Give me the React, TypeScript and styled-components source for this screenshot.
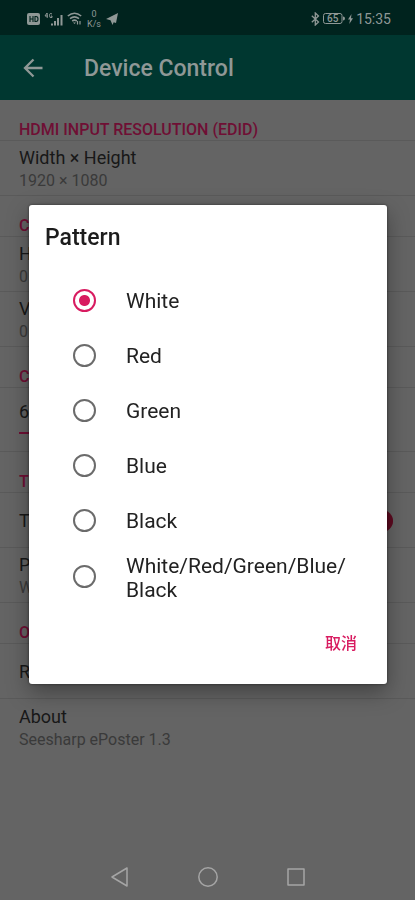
import React, { useState } from "react";
import styled, { createGlobalStyle } from "styled-components";

const color = {
  statusBar: "#00231e",
  appBar: "#003730",
  page: "#646464",
  divider: "#5a5a5a",
  barText: "#8f9896",
  title: "#181818",
  summary: "#3a3a3a",
  accentDim: "#6f0f34",
  accent: "#d81b60",
};

const GlobalStyle = createGlobalStyle`
  * { box-sizing: border-box; }
  body {
    margin: 0;
    background: ${color.page};
    font-family: Roboto, "Noto Sans CJK SC", sans-serif;
  }
  button { font: inherit; border: 0; background: none; padding: 0; cursor: pointer; }
`;

const Screen = styled.div`
  min-height: 100vh;
  display: flex;
  flex-direction: column;
`;

const StatusBar = styled.div`
  height: 35px;
  padding: 2px 24px 0 27px;
  display: flex;
  align-items: center;
  justify-content: space-between;
  background: ${color.statusBar};
  color: ${color.barText};
  font-size: 14px;
`;

const StatusGroup = styled.div<{ $gap: number }>`
  display: flex;
  align-items: center;
  gap: ${(p) => p.$gap}px;
`;

const NetSpeed = styled.div`
  width: 16px;
  font-size: 9px;
  line-height: 10px;
  text-align: center;
`;

const AppBar = styled.header`
  height: 65px;
  padding: 0 20px;
  display: flex;
  align-items: center;
  gap: 36px;
  background: ${color.appBar};
  color: ${color.barText};
`;

const BackButton = styled.button`
  display: flex;
  width: 28px;
  height: 28px;
  color: inherit;
`;

const AppTitle = styled.h1`
  margin: 0;
  padding-top: 2px;
  font-size: 23px;
  font-weight: 500;
`;

const Settings = styled.main`
  flex: 1;
`;

const SectionTitle = styled.h2`
  margin: 0;
  height: 41px;
  padding: 20px 19px 0;
  border-bottom: 1px solid ${color.divider};
  color: ${color.accentDim};
  font-size: 16px;
  line-height: 20px;
  font-weight: 500;
  white-space: nowrap;
`;

const Row = styled.div<{ $tall?: boolean; $last?: boolean }>`
  height: ${(p) => (p.$tall ? 64 : 55)}px;
  padding: 2px 19px 0;
  display: flex;
  align-items: center;
  justify-content: space-between;
  border-bottom: ${(p) => (p.$last ? 0 : 1)}px solid ${color.divider};
`;

const RowText = styled.div`
  flex: 1;
  color: ${color.title};
  font-size: 18px;
  line-height: 24px;
`;

const Summary = styled.div`
  color: ${color.summary};
  font-size: 16px;
  line-height: 22px;
`;

const Range = styled.input`
  display: block;
  appearance: none;
  width: 100%;
  height: 2px;
  margin: 8px 0;
  background: linear-gradient(to right, ${color.accentDim} 50%, transparent 50%);
`;

const Switch = styled.input`
  appearance: none;
  width: 44px;
  height: 16px;
  margin: 0 3px 0 0;
  border-radius: 8px;
  background: #65384a;
  display: flex;
  align-items: center;
  justify-content: flex-end;
  &::after {
    content: "";
    width: 22px;
    height: 22px;
    border-radius: 50%;
    background: #5e0a20;
  }
`;

const NavBar = styled.nav`
  height: 47px;
  display: flex;
  justify-content: center;
  align-items: center;
  gap: 64px;
`;

const NavButton = styled.button`
  width: 24px;
  height: 24px;
  color: #a5a5a5;
`;

const DialogLayer = styled.div`
  position: fixed;
  inset: 0;
  padding: 35px 28px 47px 29px;
  display: flex;
  align-items: center;
`;

const Dialog = styled.section`
  width: 100%;
  padding-bottom: 20px;
  border-radius: 3px;
  background: #fff;
  box-shadow: 0 8px 22px rgba(0, 0, 0, 0.35), 0 0 3px rgba(0, 0, 0, 0.5);
`;

const DialogTitle = styled.h2`
  margin: 0;
  padding: 19px 16px 21px;
  color: #1c1c1c;
  font-size: 23px;
  line-height: 28px;
  font-weight: 500;
`;

const Options = styled.div`
  display: flex;
  flex-direction: column;
`;

const Option = styled.label`
  min-height: 55px;
  padding: 4px 32px 4px 44px;
  display: flex;
  align-items: center;
  gap: 30px;
  color: #222;
  font-size: 21px;
  line-height: 24px;
  cursor: pointer;
`;

const OptionText = styled.span`
  flex: 1;
  padding-top: 2px;
`;

const Radio = styled.input`
  appearance: none;
  flex: none;
  width: 23px;
  height: 23px;
  margin: 0;
  border: 2px solid #6b6b6b;
  border-radius: 50%;
  &:checked {
    border-color: ${color.accent};
    background: radial-gradient(circle, ${color.accent} 5px, transparent 6px);
  }
`;

const Actions = styled.div`
  display: flex;
  justify-content: flex-end;
  padding: 14px 22px 0;
`;

const CancelButton = styled.button`
  height: 44px;
  padding: 0 8px;
  color: ${color.accent};
  font-size: 16px;
  font-weight: 500;
`;

const patterns = ["White", "Red", "Green", "Blue", "Black", "White/Red/Green/Blue/\u200bBlack"];

function HdIcon() {
  return (
    <svg width="13" height="12" viewBox="0 0 13 12">
      <rect width="13" height="12" rx="2" fill="currentColor" />
      <path d="M3 3v6M3 6h3M6 3v6M8 3.5v5h1q2 0 2-2.5T9 3.5z" fill="none" stroke={color.statusBar} strokeWidth="1.1" />
    </svg>
  );
}

function SignalIcon() {
  return (
    <svg width="19" height="14" viewBox="0 0 19 14" fill="none" stroke="currentColor">
      <path d="M3 1L1 4h3M3.2 1v5M8 2Q5.5 .5 5.5 3.5T8 5.5V4H7" strokeWidth="1" />
      <path d="M8 13.5v-2M11 13.5V9M14 13.5V6M17.5 13.5V3" strokeWidth="2" />
    </svg>
  );
}

function WifiIcon() {
  return (
    <svg width="15" height="13" viewBox="0 0 15 13" fill="none" stroke="currentColor" strokeWidth="1.6">
      <path d="M.8 4Q7.5-1.5 14.2 4M3 6.6q4.5-3.4 9 0M5.2 9q2.3-1.7 4.6 0" />
      <path d="M6 10.5h3L7.5 12z" fill="currentColor" stroke="none" />
      <path d="M10.5 9v3.5M13 9v3.5" strokeWidth="1.2" />
    </svg>
  );
}

function SendIcon() {
  return (
    <svg width="12" height="12" viewBox="0 0 12 12">
      <path d="M12 0L0 6l4.5 1.3L6.5 12l1.2-2.8L10 10z" fill="currentColor" />
    </svg>
  );
}

function BluetoothIcon() {
  return (
    <svg width="9" height="14" viewBox="0 0 9 14" fill="none" stroke="currentColor" strokeWidth="1.3">
      <path d="M.8 3.8L7.5 10 4.3 13V1l3.2 3L.8 10.2" />
    </svg>
  );
}

function BatteryIcon() {
  return (
    <svg width="22" height="11" viewBox="0 0 22 11">
      <rect x=".5" y=".5" width="18.5" height="10" rx="2" fill="none" stroke="currentColor" />
      <path d="M20 3.5q2 0 2 2t-2 2z" fill="currentColor" />
      <text x="9.75" y="9" textAnchor="middle" fontSize="10" fontWeight="500" fill="currentColor">65</text>
    </svg>
  );
}

function BoltIcon() {
  return (
    <svg width="5" height="10" viewBox="0 0 5 10">
      <path d="M3.5 0L0 5.6h2L1.3 10 5 4.2H3z" fill="currentColor" />
    </svg>
  );
}

function Setting({ title, summary, last }: { title: string; summary?: string; last?: boolean }) {
  return (
    <Row $last={last}>
      <RowText>
        {title}
        {summary && <Summary>{summary}</Summary>}
      </RowText>
    </Row>
  );
}

export default function App() {
  const [selected, setSelected] = useState(0);
  const [open, setOpen] = useState(true);

  return (
    <Screen>
      <GlobalStyle />
      <StatusBar>
        <StatusGroup $gap={4}>
          <HdIcon />
          <SignalIcon />
          <WifiIcon />
          <NetSpeed>
            0<br />K/s
          </NetSpeed>
          <SendIcon />
        </StatusGroup>
        <StatusGroup $gap={3}>
          <BluetoothIcon />
          <BatteryIcon />
          <BoltIcon />
          <span>15:35</span>
        </StatusGroup>
      </StatusBar>
      <AppBar>
        <BackButton aria-label="Back">
          <svg width="28" height="28" viewBox="0 0 28 28" fill="none" stroke="currentColor" strokeWidth="2.3">
            <path d="M22.5 14H5M13.5 5.5L5 14l8.5 8.5" />
          </svg>
        </BackButton>
        <AppTitle>Device Control</AppTitle>
      </AppBar>
      <Settings>
        <SectionTitle>HDMI INPUT RESOLUTION (EDID)</SectionTitle>
        <Setting title="Width × Height" summary="1920 × 1080" />
        <SectionTitle>C</SectionTitle>
        <Setting title="H" summary="0" />
        <Setting title="V" summary="0" />
        <SectionTitle>C</SectionTitle>
        <Row $tall>
          <RowText>
            <label htmlFor="level">6</label>
            <Range id="level" type="range" />
          </RowText>
        </Row>
        <SectionTitle>T</SectionTitle>
        <Row>
          <RowText as="label" htmlFor="pattern-switch">T</RowText>
          <Switch id="pattern-switch" type="checkbox" defaultChecked />
        </Row>
        <Setting title="P" summary="W" />
        <SectionTitle>O</SectionTitle>
        <Setting title="R" />
        <Setting title="About" summary="Seesharp ePoster 1.3" last />
      </Settings>
      <NavBar>
        <NavButton aria-label="Back">
          <svg width="24" height="24" viewBox="0 0 24 24" fill="none" stroke="currentColor" strokeWidth="1.5" strokeLinejoin="round">
            <path d="M19 3v18L4 12z" />
          </svg>
        </NavButton>
        <NavButton aria-label="Home">
          <svg width="24" height="24" viewBox="0 0 24 24" fill="none" stroke="currentColor" strokeWidth="1.5">
            <circle cx="12" cy="12" r="9.2" />
          </svg>
        </NavButton>
        <NavButton aria-label="Recent apps">
          <svg width="24" height="24" viewBox="0 0 24 24" fill="none" stroke="currentColor" strokeWidth="1.5" strokeLinejoin="round">
            <rect x="4" y="4" width="16" height="16" />
          </svg>
        </NavButton>
      </NavBar>
      {open && (
        <DialogLayer>
          <Dialog role="dialog" aria-modal="true" aria-labelledby="dialog-title">
            <DialogTitle id="dialog-title">Pattern</DialogTitle>
            <Options role="radiogroup" aria-labelledby="dialog-title">
              {patterns.map((name, i) => (
                <Option key={name}>
                  <Radio type="radio" name="pattern" checked={selected === i} onChange={() => setSelected(i)} />
                  <OptionText>{name}</OptionText>
                </Option>
              ))}
            </Options>
            <Actions>
              <CancelButton onClick={() => setOpen(false)}>取消</CancelButton>
            </Actions>
          </Dialog>
        </DialogLayer>
      )}
    </Screen>
  );
}
